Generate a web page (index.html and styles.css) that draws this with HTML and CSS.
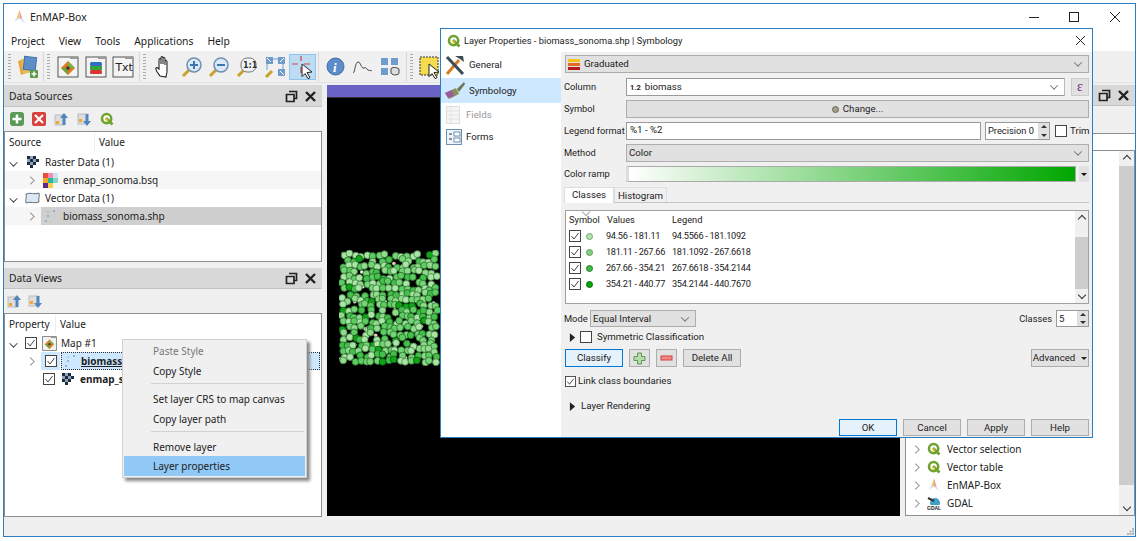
FILE: index.html
```html
<!DOCTYPE html>
<html lang="en">
<head>
<meta charset="utf-8">
<title>EnMAP-Box</title>
<link rel="stylesheet" href="styles.css">
</head>
<body>
<svg class="defs" width="0" height="0" aria-hidden="true">
  <defs>
    <symbol id="q" viewBox="0 0 14 14"><circle cx="6.6" cy="6.6" r="4.6" fill="#fff" stroke="#6ea32c" stroke-width="2.6"/><path d="M6 6l6.5 6.5" stroke="#6ea32c" stroke-width="2.6"/><path d="M5.6 6.8l2.2 2.2" stroke="#e8b93a" stroke-width="2"/></symbol>
    <symbol id="logo" viewBox="0 0 14 16"><path d="M7 0L4 9l3 1z" fill="#f4c76a"/><path d="M7 0l3 10-3 0z" fill="#eba0a0"/><path d="M4 9L1 13l6-3z" fill="#c4def5"/><path d="M7 10l3 0 3 5z" fill="#dfd5f3"/></symbol>
    <symbol id="float" viewBox="0 0 13 13"><path d="M4 1.500h7.500v7H9M1.500 4.500h7.500v7H1.500z" fill="none" stroke="#222" stroke-width="1.700"/></symbol>
    <symbol id="close" viewBox="0 0 13 13"><path d="M2 2l9 9M11 2l-9 9" stroke="#222" stroke-width="2.400"/></symbol>
    <symbol id="up" viewBox="0 0 15 15"><rect x="1" y="3" width="9" height="10" fill="#ddd" stroke="#bbb"/><rect x="2" y="9" width="3" height="3" fill="#f5a623"/><path d="M10 1l4 5h-2.500v7h-3V6H6z" fill="#4f86bd"/></symbol>
    <symbol id="down" viewBox="0 0 15 15"><rect x="1" y="2" width="9" height="10" fill="#ddd" stroke="#bbb"/><rect x="2" y="7" width="3" height="3" fill="#f5a623"/><path d="M10 14l4-5h-2.500V2h-3v7H6z" fill="#4f86bd"/></symbol>
    <symbol id="check" viewBox="0 0 12 12"><rect x=".5" y=".5" width="11" height="11" fill="#fff" stroke="#444"/><path d="M2.500 6l2.500 3 4.500-6" fill="none" stroke="#444" stroke-width="1"/></symbol>
    <symbol id="mapic" viewBox="0 0 22 22"><rect x="1" y="1" width="20" height="20" fill="#f4f4f4" stroke="#555"/><path d="M13 1h8v2h-8z" fill="#999"/><path d="M11 5l7 7-7 7-7-7z" fill="#e0791e"/><path d="M11 5l7 7-7 0z" fill="#7eb04a"/><path d="M4 12l7 7 0-7z" fill="#6fa03a"/><circle cx="11" cy="12" r="1.700" fill="#333"/></symbol>
    <symbol id="checker" viewBox="0 0 12 12"><path d="M0 0h3v3H0zM6 0h3v3H6zM3 3h3v3H3zM9 3h3v3H9zM0 6h3v3H0zM6 6h3v3H6zM3 9h3v3H3z" fill="#1f2a3c"/><path d="M3 0h3v3H3zM0 3h3v3H0zM6 3h3v3H6zM3 6h3v3H3z" fill="#8fa4bf"/></symbol>
    <symbol id="pts" viewBox="0 0 14 14"><g fill="#7ca6c9"><circle cx="3" cy="12" r="1"/><circle cx="5" cy="7" r="1"/><circle cx="11" cy="2" r="1"/><circle cx="5" cy="3" r=".7"/></g></symbol>
    <symbol id="tri" viewBox="0 0 8 10"><path d="M1 0l6 5-6 5z" fill="#222"/></symbol>
  </defs>
</svg>

<div class="window">
  <header class="titlebar">
    <svg class="logo"><use href="#logo"/></svg>
    <span class="title">EnMAP-Box</span>
    <div class="winbtns">
      <svg width="12" height="12" viewBox="0 0 12 12"><path d="M1 6.500h10" stroke="#222"/></svg>
      <svg width="12" height="12" viewBox="0 0 12 12"><rect x="1.500" y="1.500" width="9" height="9" fill="none" stroke="#222"/></svg>
      <svg width="12" height="12" viewBox="0 0 12 12"><path d="M1 1l10 10M11 1L1 11" stroke="#222"/></svg>
    </div>
  </header>
  <nav class="menubar"><span>Project</span><span>View</span><span>Tools</span><span>Applications</span><span>Help</span></nav>
  <div class="toolbar">
    <i class="grip"></i>
    <span class="tb first"><svg width="24" height="24" viewBox="0 0 24 24"><path d="M2 6l8-3 3 14-8 3z" fill="#e8a33a"/><path d="M5 4l9-1 2 14-9 2z" fill="#e2c05a"/><rect x="8" y="2" width="12" height="13" fill="#5c8fc9" stroke="#3f6ea6" transform="rotate(6 14 8)"/><rect x="14" y="15" width="8" height="8" rx="1" fill="#5a9a48"/><path d="M18 16.500v5M15.500 19h5" stroke="#fff" stroke-width="1.600"/></svg></span>
    <i class="sep"></i><i class="grip"></i>
    <span class="tb"><svg width="22" height="22"><use href="#mapic"/></svg></span>
    <span class="tb"><svg width="22" height="22" viewBox="0 0 22 22"><rect x="1" y="1" width="20" height="20" fill="#f4f4f4" stroke="#555"/><path d="M13 1h8v2h-8z" fill="#999"/><rect x="5" y="14" width="12" height="4" rx="1.500" fill="#d9342b"/><rect x="5" y="10" width="12" height="4" fill="#3aa23a"/><rect x="5" y="6" width="12" height="4" rx="1.500" fill="#2c6fc4"/></svg></span>
    <span class="tb"><svg width="22" height="22" viewBox="0 0 22 22"><rect x="1" y="1" width="20" height="20" fill="#f4f4f4" stroke="#555"/><path d="M13 1h8v2h-8z" fill="#999"/></svg><b class="txt">Txt</b></span>
    <i class="sep"></i><i class="grip"></i>
    <span class="tb"><svg width="20" height="22" viewBox="0 0 20 22"><path d="M6 20c-2-3-5-6-4-8 1-1 2 0 3 1V4c0-2 2-2 2 0v4-6c0-2 2-2 2 0v6-5c0-2 2-2 2 0v6-3c0-2 2-2 2 0v9c0 3-1 4-1 6z" fill="#fff" stroke="#222" stroke-width="1.100"/></svg></span>
    <span class="tb"><svg width="22" height="22" viewBox="0 0 22 22"><path d="M2 20l6-6" stroke="#c9a227" stroke-width="3"/><circle cx="13" cy="9" r="7" fill="#dbe8f5" stroke="#6d8fb3" stroke-width="1.500"/><path d="M13 5v8M9 9h8" stroke="#3f75ad" stroke-width="2"/></svg></span>
    <span class="tb"><svg width="22" height="22" viewBox="0 0 22 22"><path d="M2 20l6-6" stroke="#c9a227" stroke-width="3"/><circle cx="13" cy="9" r="7" fill="#dbe8f5" stroke="#6d8fb3" stroke-width="1.500"/><path d="M9 9h8" stroke="#3f75ad" stroke-width="2"/></svg></span>
    <span class="tb"><svg width="22" height="22" viewBox="0 0 22 22"><path d="M2 20l6-6" stroke="#c9a227" stroke-width="3"/><rect x="5" y="2" width="15" height="14" rx="6" fill="#eef2f6" stroke="#777"/><text x="7" y="12" class="one">1:1</text></svg></span>
    <span class="tb"><svg width="22" height="22" viewBox="0 0 22 22"><path d="M2 21l6-6" stroke="#c9a227" stroke-width="3"/><rect x="2" y="1" width="7" height="7" fill="#6e9ccc"/><rect x="14" y="1" width="7" height="7" fill="#6e9ccc"/><rect x="14" y="13" width="7" height="7" fill="#6e9ccc"/><path d="M8 3h7M3 8v6M19 8v5" stroke="#6e9ccc"/><path d="M3 2l4 4M20 2l-4 4M20 19l-4-4" stroke="#fff"/></svg></span>
    <span class="tb active"><svg width="24" height="24" viewBox="0 0 24 24"><path d="M2 9h6M14 9h6M11 1v5M11 12v6" stroke="#d8403a" stroke-width="1.200"/><path d="M12 9l10 8-5 .6 3 5-2 1-3-5-3 3z" fill="#fff" stroke="#222"/></svg></span>
    <i class="sep"></i>
    <span class="tb"><svg width="19" height="19" viewBox="0 0 19 19"><circle cx="9.500" cy="9.500" r="8.500" fill="#5c8dc8" stroke="#3e6ea6"/><text x="7" y="15" class="info">i</text></svg></span>
    <span class="tb"><svg width="21" height="14" viewBox="0 0 21 14"><path d="M1 13C3 13 3 2 6 2s3 7 6 6 2 1 4 2 3 0 4 1" fill="none" stroke="#444"/></svg></span>
    <span class="tb"><svg width="21" height="21" viewBox="0 0 21 21"><g fill="#6e9ccc"><rect x="1" y="2" width="7" height="7"/><rect x="11" y="2" width="7" height="7"/><rect x="1" y="12" width="7" height="7"/></g><path d="M11 13c0-2 6-2 8 0v4c0 2-6 3-8 0z" fill="#ddd" stroke="#444"/></svg></span>
    <i class="sep"></i><i class="grip"></i>
    <span class="tb"><svg width="24" height="24" viewBox="0 0 24 24"><rect x="1" y="2" width="18" height="18" fill="#f5dc4e" stroke="#333" stroke-dasharray="2 1"/><path d="M10 9l10 8-5 .6 3 5-2 1-3-5-3 3z" fill="#fff" stroke="#222"/></svg></span>
  </div>

  <div class="workspace">
    <aside class="leftdock">
      <section class="dock ds">
        <div class="docktitle tall"><span>Data Sources</span><svg><use href="#float"/></svg><svg><use href="#close"/></svg></div>
        <div class="docktools">
          <svg width="14" height="14" viewBox="0 0 14 14"><rect width="14" height="14" rx="3" fill="#5a9a58"/><path d="M7 2.500v9M2.500 7h9" stroke="#fff" stroke-width="2.500"/></svg>
          <svg width="14" height="14" viewBox="0 0 14 14"><rect width="14" height="14" rx="2" fill="#d8423c"/><path d="M3 3l8 8M11 3l-8 8" stroke="#fff" stroke-width="2.200"/></svg>
          <svg width="15" height="15"><use href="#up"/></svg>
          <svg width="15" height="15"><use href="#down"/></svg>
          <svg width="14" height="14"><use href="#q"/></svg>
        </div>
        <div class="panel">
          <div class="hdr raised"><span class="c1">Source</span><span class="c2">Value</span></div>
          <div class="row l0"><span class="chev dn"></span><svg class="ic12"><use href="#checker"/></svg><span>Raster Data (1)</span></div>
          <div class="row l1 alt"><span class="chev"></span><svg class="ic15" viewBox="0 0 15 15"><rect width="5" height="5" fill="#e84c3d"/><rect x="5" width="5" height="5" fill="#f48fb1"/><rect x="10" width="5" height="5" fill="#cfe3ee"/><rect y="5" width="5" height="5" fill="#f5a623"/><rect x="5" y="5" width="5" height="5" fill="#2bb5a0"/><rect x="10" y="5" width="5" height="5" fill="#7fd6c9"/><rect y="10" width="5" height="5" fill="#5b2a86"/><rect x="5" y="10" width="5" height="5" fill="#f7d046"/></svg><span>enmap_sonoma.bsq</span></div>
          <div class="row l0"><span class="chev dn"></span><svg class="ic15" viewBox="0 0 15 15"><path d="M1 3c4-2 9 1 13-1 1 3-1 6 0 9-4 2-9-1-13 1-1-3 1-6 0-9z" fill="#dbe7f3" stroke="#6a6f75"/></svg><span>Vector Data (1)</span></div>
          <div class="row l1 sel"><span class="chev"></span><span class="selwrap"><svg class="ic14"><use href="#pts"/></svg><span>biomass_sonoma.shp</span></span></div>
        </div>
      </section>
      <section class="dock dv">
        <div class="docktitle"><span>Data Views</span><svg><use href="#float"/></svg><svg><use href="#close"/></svg></div>
        <div class="docktools tight">
          <svg width="15" height="15"><use href="#up"/></svg>
          <svg width="15" height="15"><use href="#down"/></svg>
        </div>
        <div class="panel">
          <div class="hdr short"><span class="c1b">Property</span><span class="c2">Value</span></div>
          <div class="row m0"><span class="chev dn"></span><svg class="cb"><use href="#check"/></svg><svg class="ic15b"><use href="#mapic"/></svg><span>Map #1</span></div>
          <div class="row m1"><span class="chev"></span><span class="cbwrap"><svg class="cb"><use href="#check"/></svg></span><span class="focus"><svg class="ic14"><use href="#pts"/></svg><b class="u">biomass_sonoma.shp</b></span></div>
          <div class="row m2"><svg class="cb"><use href="#check"/></svg><svg class="ic12"><use href="#checker"/></svg><b>enmap_sonoma.bsq</b></div>
        </div>
      </section>
    </aside>

    <main class="mapwrap">
      <div class="mapbar"></div>
      <div class="mapcanvas"><svg id="dots" class="dots" width="102" height="116" viewBox="0 0 102 116"></svg></div>
    </main>

    <aside class="rightdock">
      <div class="docktitle end"><svg><use href="#float"/></svg><svg><use href="#close"/></svg></div>
      <div class="rgap"></div>
      <div class="searchbox"></div>
      <div class="panel rpanel">
        <div class="rlist">
          <div class="row r"><span class="chev"></span><svg class="ic14"><use href="#q"/></svg><span>Vector selection</span></div>
          <div class="row r"><span class="chev"></span><svg class="ic14"><use href="#q"/></svg><span>Vector table</span></div>
          <div class="row r"><span class="chev"></span><svg class="ic14"><use href="#logo"/></svg><span>EnMAP-Box</span></div>
          <div class="row r"><span class="chev"></span><svg class="ic14" viewBox="0 0 14 14"><circle cx="8" cy="7" r="5" fill="#3fa0c8"/><path d="M1 2l6 3" stroke="#333" stroke-width="2"/><rect y="9" width="14" height="4" fill="#fff"/><text x="0" y="13.500" class="gdal">GDAL</text></svg><span>GDAL</span></div>
          <div class="row r"><span class="chev"></span><svg class="ic14" viewBox="0 0 14 14"><circle cx="7" cy="7" r="5" fill="none" stroke="#5a9a48"/></svg><span>GRASS</span></div>
        </div>
        <div class="vscroll"><span class="arr"></span><i class="thumb"></i><span class="arr dnarr"></span></div>
      </div>
    </aside>
  </div>
  <footer class="statusbar"><svg width="7" height="7" viewBox="0 0 7 7"><path d="M5 0h2v2H5zM2.500 2.500h2v2h-2zM5 2.500h2v2H5zM0 5h2v2H0zM2.500 5h2v2h-2zM5 5h2v2H5z" fill="#b5b5b5"/></svg></footer>
</div>

<div class="ctxmenu">
  <div class="mi off">Paste Style</div>
  <div class="mi">Copy Style</div>
  <hr>
  <div class="mi">Set layer CRS to map canvas</div>
  <div class="mi">Copy layer path</div>
  <hr>
  <div class="mi">Remove layer</div>
  <div class="mi hot">Layer properties</div>
</div>

<div class="dialog">
  <header class="dtitle">
    <svg class="ic14"><use href="#q"/></svg>
    <span>Layer Properties - biomass_sonoma.shp | Symbology</span>
    <svg class="dx" width="11" height="11" viewBox="0 0 11 11"><path d="M1 1l9 9M10 1l-9 9" stroke="#222"/></svg>
  </header>
  <div class="dbody">
    <ul class="dnav">
      <li><svg width="22" height="22" viewBox="0 0 22 22"><path d="M3 20L15 6" stroke="#d97a1f" stroke-width="3"/><path d="M3 3l16 17" stroke="#3c4a57" stroke-width="3"/><path d="M11 2h8l1 6-4-3z" fill="#3c4a57"/></svg><span>General</span></li>
      <li class="on"><svg width="22" height="22" viewBox="0 0 22 22"><path d="M1 13l11-5 3 6-10 5z" fill="#8a8f5a"/><path d="M1 13l7-3 2 6-6 2z" fill="#9a5a9c"/><path d="M13 9l7-7 1 2-6 8z" fill="#6b7a55"/></svg><span>Symbology</span></li>
      <li class="dis"><svg width="14" height="18" viewBox="0 0 14 18"><rect x=".5" y=".5" width="13" height="17" fill="#f6f6f6" stroke="#ddd"/><path d="M5 1v16M1 5h12M1 9h12M1 13h12" stroke="#e2e2e2"/></svg><span>Fields</span></li>
      <li class="sm"><svg width="16" height="16" viewBox="0 0 16 16"><rect x=".5" y=".5" width="15" height="15" fill="#eef3f9" stroke="#6d8fb3"/><path d="M3 5h3M3 10h3" stroke="#333"/><rect x="8" y="3" width="6" height="4" fill="#fff" stroke="#6d8fb3"/><rect x="8" y="9" width="6" height="4" fill="#fff" stroke="#6d8fb3"/></svg><span>Forms</span></li>
    </ul>
    <div class="dpane">
      <div class="combo wide"><svg width="13" height="13" viewBox="0 0 13 13"><rect y="1" width="12" height="3" fill="#f5c518"/><rect y="5" width="12" height="3" fill="#e86a1e"/><rect y="9" width="12" height="3" fill="#b71c1c"/></svg><span>Graduated</span><i class="vee"></i></div>
      <div class="form">
        <label>Column</label>
        <div class="fieldrow"><div class="combo white grow"><small>1.2</small><span>biomass</span><i class="vee"></i></div><span class="eps">ε</span></div>
        <label>Symbol</label>
        <div class="btn symbolbtn"><i class="dot"></i>Change...</div>
        <label>Legend format</label>
        <div class="fieldrow f4"><div class="input grow">%1 - %2</div><div class="spin prec"><span>Precision 0</span><i class="spinbtn"></i></div><svg class="cbplain" viewBox="0 0 12 12"><rect x=".5" y=".5" width="11" height="11" fill="#fff" stroke="#444"/></svg><span class="trim">Trim</span></div>
        <label>Method</label>
        <div class="combo"><span>Color</span><i class="vee"></i></div>
        <label>Color ramp</label>
        <div class="fieldrow f3"><div class="ramp grow"></div><i class="ramparrow"></i></div>
      </div>
      <div class="tabs"><span class="tab cur">Classes</span><span class="tab">Histogram</span></div>
      <div class="classes">
        <div class="cl-main">
          <div class="cl-hdr"><span class="h1">Symbol</span><span class="h2">Values</span><span>Legend</span></div>
          <div class="cl-row"><svg class="cb"><use href="#check"/></svg><i class="sw s1"></i><span class="v">94.56 - 181.11</span><span>94.5566 - 181.1092</span></div>
          <div class="cl-row"><svg class="cb"><use href="#check"/></svg><i class="sw s2"></i><span class="v">181.11 - 267.66</span><span>181.1092 - 267.6618</span></div>
          <div class="cl-row"><svg class="cb"><use href="#check"/></svg><i class="sw s3"></i><span class="v">267.66 - 354.21</span><span>267.6618 - 354.2144</span></div>
          <div class="cl-row"><svg class="cb"><use href="#check"/></svg><i class="sw s4"></i><span class="v">354.21 - 440.77</span><span>354.2144 - 440.7670</span></div>
        </div>
        <div class="vscroll small"><span class="arr"></span><i class="thumb"></i><span class="arr dnarr"></span></div>
      </div>
      <div class="moderow">
        <label class="modelabel">Mode</label><div class="combo mode"><span>Equal Interval</span><i class="vee"></i></div>
        <label class="push">Classes</label><div class="spin cnt"><span class="wh">5</span><i class="spinbtn"></i></div>
      </div>
      <div class="symrow"><svg class="tri"><use href="#tri"/></svg><svg class="cbplain" viewBox="0 0 12 12"><rect x=".5" y=".5" width="11" height="11" fill="#fff" stroke="#444"/></svg><span>Symmetric Classification</span></div>
      <div class="btnrow">
        <span class="btn focusbtn w58">Classify</span>
        <span class="btn w21"><svg width="13" height="13" viewBox="0 0 13 13"><path d="M4.500 1h4v3.500H12v4H8.500V12h-4V8.500H1v-4h3.500z" fill="#b7dba8" stroke="#5a9a58"/></svg></span>
        <span class="btn w21"><svg width="13" height="7" viewBox="0 0 13 7"><rect x="1" y="1" width="11" height="4" fill="#f08a8a" stroke="#d8423c"/></svg></span>
        <span class="btn w58">Delete All</span>
        <span class="btn adv">Advanced<i class="down"></i></span>
      </div>
      <div class="linkrow"><svg class="cb"><use href="#check"/></svg><span>Link class boundaries</span></div>
      <div class="renderrow"><svg class="tri"><use href="#tri"/></svg><span>Layer Rendering</span></div>
      <div class="okrow"><span class="btn focusbtn">OK</span><span class="btn">Cancel</span><span class="btn">Apply</span><span class="btn">Help</span></div>
    </div>
  </div>
</div>
<script src="app.js"></script>
</body>
</html>
```
FILE: styles.css
```css
* { box-sizing: border-box; }
html, body { margin: 0; height: 100%; background: #fff; overflow: hidden; }
body { font: 10px/1.2 "Noto Sans", "Open Sans", sans-serif; color: #222; position: relative; }
.defs { position: absolute; }
svg { display: block; flex: none; }

.window { position: absolute; left: 3px; top: 3px; width: 1133px; height: 534px; border: 1px solid #2b7cc0; background: #f0f0f0; display: flex; flex-direction: column; }
.titlebar { height: 26px; background: #fff; display: flex; align-items: center; padding-left: 9px; flex: none; }
.logo { width: 13px; height: 16px; }
.title { margin-left: 4px; font-size: 10.500px; }
.winbtns { margin-left: auto; display: flex; gap: 28.500px; padding-right: 14.500px; }
.menubar { height: 21px; background: #fff; display: flex; gap: 14px; padding: 5px 0 0 7px; font-size: 10.300px; flex: none; }
.toolbar { height: 32px; display: flex; align-items: center; padding-left: 3px; flex: none; border-bottom: 1px solid #e4e4e4; }
.grip { width: 3px; height: 25px; margin: 0 4px 0 1px; background: repeating-linear-gradient(#aaa 0 1px, transparent 1px 3px); flex: none; }
.sep { width: 1px; height: 30px; background: #d8d8d8; margin: 0 2px; flex: none; }
.tb { width: 27.700px; height: 26px; display: flex; align-items: center; justify-content: center; position: relative; flex: none; }
.tb.first { width: 26px; }
.tb.active { background: #bcdcf3; border: 1px solid #90c4ec; }
.txt { position: absolute; left: 6px; top: 7px; font: 400 11px "DejaVu Sans", sans-serif; }
.one { font: 700 8px "DejaVu Sans", sans-serif; fill: #333; }
.info { font: italic 700 13px "Liberation Serif", serif; fill: #fff; }
.gdal { font: 700 5px "Liberation Sans", sans-serif; fill: #222; }

.workspace { flex: 1; display: flex; min-height: 0; padding-top: 2px; }
.leftdock { width: 318px; display: flex; flex-direction: column; flex: none; }
.dock { display: flex; flex-direction: column; }
.ds { height: 177px; }
.dv { height: 249px; margin-top: 6px; }
.docktitle { height: 21px; background: #d8d8d8; border-bottom: 1px solid #c4c4c4; display: flex; align-items: center; padding: 1px 5px 0 5px; font-size: 10.300px; flex: none; }
.docktitle.tall { height: 22px; padding-top: 2px; }
.docktitle span { margin-right: auto; }
.docktitle svg { width: 13px; height: 13px; margin-left: 6px; }
.docktitle.end { justify-content: flex-end; }
.docktools { height: 24px; display: flex; align-items: center; gap: 8px; padding: 0 0 0 6px; flex: none; }
.docktools.tight { gap: 6px; padding: 0 0 0 3px; height: 24px; }
.panel { flex: 1; background: #fff; border: 1px solid #8a8f96; min-height: 0; }
.hdr { height: 21px; display: flex; align-items: center; padding-left: 4px; }
.hdr.raised { padding-bottom: 2px; }
.hdr.short { height: 20px; }
.c1 { width: 85px; }
.c1b { width: 46px; }
.c2 { border-left: 1px solid #eee; padding: 3px 0 3px 4px; }
.row { height: 18px; display: flex; align-items: center; }
.chev { width: 7px; height: 7px; border: solid #888; border-width: 1.400px 1.400px 0 0; transform: rotate(45deg) scale(.85); flex: none; }
.chev.dn { border-color: #333; transform: rotate(135deg) scale(.85); }
.l0 { padding-left: 5px; }
.l0 .ic12 { margin-left: 10px; margin-right: 6px; }
.l0 .ic15 { margin-left: 8px; margin-right: 5px; }
.l1 { padding-left: 22px; }
.l1 .ic15 { margin-left: 9px; margin-right: 5px; }
.alt { background: #f6f6f6; }
.sel { background: linear-gradient(90deg, #f6f6f6 36px, #cfcfcf 36px); }
.selwrap { display: flex; align-items: center; margin-left: 9px; gap: 6px; }
.ic12 { width: 12px; height: 12px; }
.ic14 { width: 14px; height: 14px; }
.ic15 { width: 15px; height: 15px; }
.ic15b { width: 15px; height: 15px; margin: 0 4px 0 5px; }
.cb { width: 12px; height: 12px; }
.m0 { padding-left: 5px; }
.m0 .cb { margin-left: 8px; }
.m1 { padding-left: 22px; }
.m1 .chev { margin-right: 7px; }
.cbwrap { background: #cde8ff; height: 18px; width: 19px; display: flex; align-items: center; justify-content: center; flex: none; }
.focus { flex: 1; height: 18px; margin-left: 1px; margin-right: 1px; background: #cde8ff; border: 1px dotted #333; display: flex; align-items: center; gap: 4px; padding-left: 1px; }
.u { text-decoration: underline; }
.m2 { padding-left: 38px; }
.m2 .ic12 { margin: 0 6px 0 7px; }

.mapwrap { width: 573px; margin-left: 5px; flex: none; display: flex; flex-direction: column; height: 431px; }
.mapbar { height: 13px; background: #6a62c4; border-bottom: 1px solid #333; flex: none; }
.mapcanvas { flex: 1; background: #000; padding: 152px 0 0 12px; overflow: hidden; }
.rightdock { flex: 1; margin-left: 5px; display: flex; flex-direction: column; height: 431px; }
.rgap { height: 27px; flex: none; }
.searchbox { height: 18px; background: #fff; border: solid #8a8f96; border-width: 1px 0 1px 1px; flex: none; }
.rpanel { display: flex; justify-content: flex-end; overflow: hidden; border-top: 0; }
.rlist { flex: 1; padding-top: 289px; }
.row.r { padding-left: 6px; gap: 7px; }
.row.r .ic14 { margin-left: 1px; margin-right: -1px; }
.vscroll { width: 15px; background: #f0f0f0; display: flex; flex-direction: column; align-items: center; flex: none; }
.vscroll .thumb { width: 100%; background: #cdcdcd; flex: 1; margin: 3px 0 18px; }
.arr { height: 12px; width: 100%; position: relative; flex: none; }
.arr::after { content: ""; position: absolute; left: 50%; top: 5px; width: 5px; height: 5px; margin-left: -2.500px; border: solid #333; border-width: 1.300px 0 0 1.300px; transform: rotate(45deg); }
.arr.dnarr::after { top: 1px; transform: rotate(225deg); }

.statusbar { height: 18px; flex: none; margin-top: auto; display: flex; justify-content: flex-end; align-items: flex-end; padding: 0 1px 1px 0; }

.ctxmenu { position: absolute; left: 122px; top: 339px; width: 185px; height: 139px; background: #f0f0f0; border: 1px solid #d0d0d0; box-shadow: 3px 3px 3px #888; padding: 1px 1px 0; }
.mi { height: 19.700px; padding: 4px 0 0 29px; }
.mi.off { color: #777; }
.mi.hot { background: #90c8f6; }
.ctxmenu hr { margin: 3px 1px 4.500px 27px; border: 0; border-top: 1px solid #d2d2d2; }

.dialog { position: absolute; left: 440px; top: 28px; width: 653px; height: 410px; background: #f0f0f0; border: 1px solid #2b7cc0; display: flex; flex-direction: column; font: 9.700px/1.2 Roboto, "Noto Sans", sans-serif; }
.dtitle { height: 23px; background: #fff; display: flex; align-items: center; gap: 3px; padding-left: 6px; flex: none; font-size: 9.300px; }
.dx { margin-left: auto; margin-right: 6px; }
.dbody { flex: 1; display: flex; min-height: 0; }
.dnav { width: 120px; background: #fff; margin: 0; padding: 0; list-style: none; flex: none; }
.dnav li { height: 26px; display: flex; align-items: center; gap: 3px; padding-left: 3px; }
.dnav li.on { background: #cde8ff; height: 25px; }
.dnav li.dis { color: #999; padding-left: 5px; gap: 6px; height: 24px; }
.dnav li.sm { padding-left: 5px; gap: 4px; height: 20px; }
.dpane { flex: 1; padding: 3px 3px 0 3px; display: flex; flex-direction: column; min-width: 0; }
.combo { height: 18px; background: #e1e1e1; border: 1px solid #adadad; display: flex; align-items: center; gap: 3px; padding: 0 4px 0 2px; }
.combo.white { background: #fff; border-color: #999 #bbb #999 #999; padding-left: 3px; gap: 4px; }
.combo small { font-size: 7.500px; font-weight: 700; }
.vee { width: 6px; height: 6px; border: solid #777; border-width: 0 1px 1px 0; transform: rotate(45deg) translate(-1px,-1px); margin-left: auto; margin-right: 3px; flex: none; }
.wide { margin-left: 1px; }
.form { display: grid; grid-template-columns: 62px 1fr; row-gap: 4px; margin-top: 5px; align-items: center; }
.form label { white-space: nowrap; font-size: 9.300px; }
.fieldrow { display: flex; align-items: center; gap: 6px; height: 18px; }
.grow { flex: 1; min-width: 0; }
.eps { width: 18px; height: 18px; background: #e1e1e1; border: 1px solid #ccc; color: #6a2d82; font: 14px/15px "Liberation Serif", serif; text-align: center; flex: none; }
.btn { background: #e1e1e1; border: 1px solid #adadad; display: flex; align-items: center; justify-content: center; flex: none; }
.symbolbtn { height: 18px; gap: 4px; }
.dot { width: 7px; height: 7px; border-radius: 50%; background: #a89f80; border: 1px solid #666; }
.input { height: 18px; background: #fff; border: 1px solid #999; padding: 1px 3px; }
.f4 { gap: 4px; }
.spin { height: 18px; display: flex; align-items: center; background: #fff; border: 1px solid #999; position: relative; padding-left: 2px; white-space: nowrap; flex: none; }
.prec { width: 65px; font-size: 9.300px; }
.cnt { width: 33px; }
.spinbtn { margin-left: auto; width: 11px; height: 100%; background: #e1e1e1; position: relative; border-left: 1px solid #ddd; flex: none; }
.spinbtn::before, .spinbtn::after { content: ""; position: absolute; left: 2px; border: 3px solid transparent; }
.spinbtn::before { top: -1px; border-bottom-color: #333; }
.spinbtn::after { bottom: -1px; border-top-color: #333; }
.cbplain { width: 12px; height: 12px; margin-left: 1px; }
.trim { width: 19px; margin-left: -1px; }
.f3 { gap: 3px; height: 16px; }
.ramp { height: 16px; border: 1px solid #aaa; border-left: 3px solid #ddd; background: linear-gradient(90deg, #fff, #00a700); }
.ramparrow { width: 10px; height: 16px; background: #e1e1e1; position: relative; flex: none; }
.ramparrow::after { content: ""; position: absolute; left: 2px; top: 7px; border: 3px solid transparent; border-top-color: #111; }
.tabs { display: flex; height: 16px; margin-top: 5px; border-bottom: 1px solid #c6c6c6; flex: none; }
.tab { padding: 2px 0 0; border: 1px solid #ddd; border-bottom: 0; background: #f0f0f0; width: 53px; text-align: center; }
.tab.cur { background: #fff; padding: 1px 0 0; height: 16px; width: 50px; }
.classes { height: 94px; margin: 7px 0 0 1px; background: #fff; border: 1px solid #a0a0a0; display: flex; flex: none; }
.cl-main { flex: 1; padding: 1px 0 0 3px; }
.cl-hdr { display: flex; height: 15px; margin-bottom: 1px; align-items: center; position: relative; font-size: 9.300px; }
.cl-hdr::before { content: ""; position: absolute; left: 14px; top: -3px; width: 5px; height: 5px; border: solid #aaa; border-width: 0 1px 1px 0; transform: rotate(45deg); }
.h1 { width: 38px; }
.h2 { width: 65px; }
.cl-row { display: flex; align-items: center; height: 16px; font-size: 9.200px; letter-spacing: -.3px; }
.cl-row .sw { width: 7px; height: 7px; border-radius: 50%; margin: 0 13px 0 5px; border: 1px solid #444; flex: none; }
.v { width: 66px; white-space: nowrap; }
.s1 { background: #b7e2b1; border-color: #6aa56a !important; }
.s2 { background: #86d083; border-color: #5d9e5d !important; }
.s3 { background: #3fba49; border-color: #2d7f2d !important; }
.s4 { background: #00a700; border-color: #0b6b0b !important; }
.vscroll.small { width: 13px; }
.vscroll.small .thumb { flex: none; height: 52px; margin: 14px 0 0; }
.vscroll.small .dnarr { margin-top: auto; }
.moderow { display: flex; align-items: center; height: 17px; margin-top: 6px; gap: 4px; }
.modelabel { width: 22px; font-size: 9.300px; }
.mode { width: 106px; height: 17px; }
.push { margin-left: auto; font-size: 9.300px; }
.cnt { height: 17px; }
.wh { flex: 1; }
.symrow { display: flex; align-items: center; height: 14px; margin-top: 3px; padding-left: 5px; }
.tri { width: 7px; height: 9px; }
.symrow .cbplain { margin: 0 5px 0 4px; }
.btnrow { display: flex; height: 18px; margin-top: 5px; gap: 6px; padding-left: 1px; }
.w58 { width: 58px; }
.w21 { width: 21px; }
.focusbtn { background: #e5f1fb; border: 1.500px solid #0078d7; }
.adv { margin-left: auto; width: 58px; gap: 6px; }
.down { border: 3px solid transparent; border-top-color: #222; margin-top: 3px; }
.linkrow { display: flex; align-items: center; gap: 2px; height: 14px; margin-top: 7px; padding-left: 1px; }
.linkrow .cb { width: 11px; height: 11px; }
.renderrow { display: flex; align-items: center; gap: 5px; height: 14px; margin-top: 11px; padding-left: 5px; }
.okrow { display: flex; justify-content: flex-end; gap: 6px; margin-top: 6px; height: 17px; }
.okrow .btn { width: 58px; }
```
FILE: app.js
```js
// Scatter of graduated points drawn on the map canvas.
(function () {
  var svg = document.getElementById('dots');
  var NS = 'http://www.w3.org/2000/svg';
  var seed = 11;
  function rnd() { seed = (seed * 16807) % 2147483647; return seed / 2147483647; }
  function add(cx, cy, r, fill, stroke) {
    var c = document.createElementNS(NS, 'circle');
    c.setAttribute('cx', cx.toFixed(1));
    c.setAttribute('cy', cy.toFixed(1));
    c.setAttribute('r', r);
    c.setAttribute('fill', fill);
    c.setAttribute('stroke', stroke);
    c.setAttribute('stroke-width', '.9');
    svg.appendChild(c);
  }
  var ramp = [['#a9e6a6', '#4f8a4f'], ['#8fdc8c', '#437f43'], ['#74d476', '#357a35'], ['#5ccc63', '#2a752a'], ['#43bf4c', '#206a20']];
  var dark = ['#0ea616', '#0b5f0e'];
  var y, x;
  // pale imagery peeking through the points
  for (y = 2; y < 112; y += 8) {
    for (x = 2; x < 102; x += 10) {
      if (rnd() < 0.35) add(x + rnd() * 5, y + rnd() * 5, 1.8, rnd() < 0.3 ? '#e8c8b8' : '#f2f2ea', 'none');
    }
  }
  for (y = 5; y < 112; y += 5.6) {
    for (x = 4; x < 102; x += 5.8) {
      if (rnd() < 0.1) continue;
      var cx = x + rnd() * 4 - 2, cy = y + rnd() * 4 - 2;
      var p = ramp[Math.floor(rnd() * ramp.length)];
      if (rnd() < 0.09) p = dark;
      add(cx, cy, 3.4, p[0], p[1]);
    }
  }
})();
```
